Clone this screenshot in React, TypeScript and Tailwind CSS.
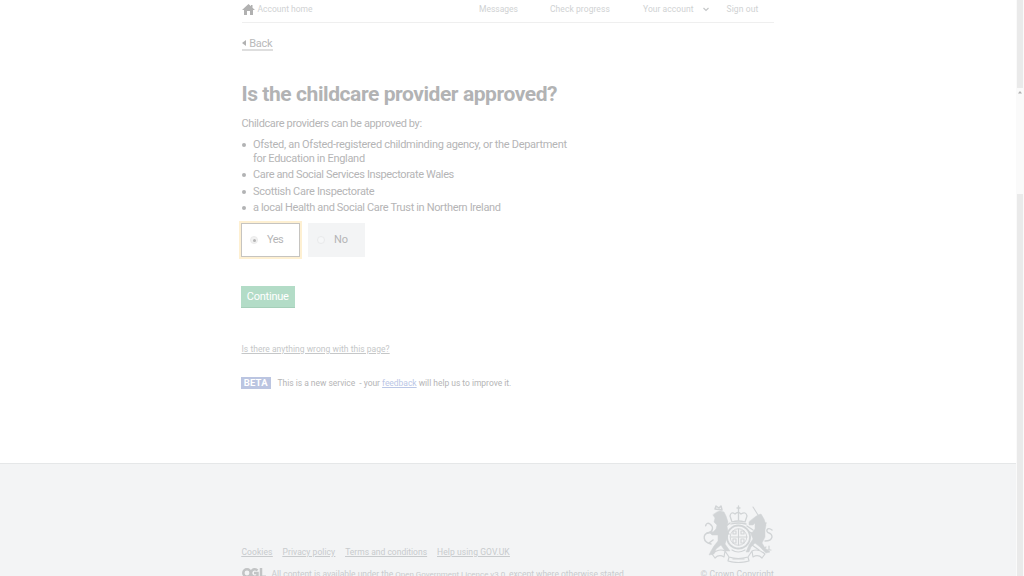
import React from "react";

const bullets = [
  { text: "Care and Social Services Inspectorate Wales", cls: "tracking-[-0.370px]" },
  { text: "Scottish Care Inspectorate", cls: "tracking-[-0.310px]" },
  { text: "a local Health and Social Care Trust in Northern Ireland", cls: "tracking-[-0.350px]" },
];

function Crest() {
  return (
    <svg className="shrink-0" width="71" height="59" viewBox="0 0 71 59" fill="#d1d4d6" stroke="#d1d4d6" strokeLinecap="round" strokeLinejoin="round">
      <path d="M29 18 L27 12 Q28 7 32 10 Q35 7 38 10 Q43 7 44 12 L42 18 Q35 16 29 18Z" fill="none" strokeWidth="1.300" />
      <path d="M35.500 2v14M34 4h3M28 20q7-2 15 0" fill="none" strokeWidth="1.300" />
      <circle cx="35.500" cy="33" r="11.500" fill="none" strokeWidth="1.900" strokeDasharray="2 .7" />
      <circle cx="35.500" cy="33" r="8.300" fill="none" strokeWidth=".9" />
      <path d="M35.500 25v16M28 33h15M30 27h3v3h-3zM38 27h3v3h-3zM30 35h3v4h-3zM38 35h3v4h-3z" fill="none" strokeWidth="1.100" />
      <path d="M14 8l3-1 4 1 2 4 2 6-1 4 1 6-1 6-2 6 5 7h-5l-4-6-5 4-2 5-5 1 2-4 3-5 4-5v-6l-6 0-2-2 3-1 3-3 1-4-3-3 1-4-2-3z" strokeWidth=".5" />
      <path d="M12 5l1-3 3 2 2-2 1 4zM23 22l4-3M23 28l3 2M9 28l-5 1M10 36l-4 3" fill="none" strokeWidth="1.500" />
      <path d="M8 40C-1 38 0 30 5 29S11 23 7 20 2 24 3 21" fill="none" strokeWidth="1.400" />
      <path d="M50 3l5 8" fill="none" strokeWidth="1.100" />
      <path d="M52 13l3-2 3-1 3 5 2 6-1 5 0 7-3 6 3 5 5 4-4 1-6-6-5-4-4 4-2 5-3 0 3-7 4-6-2-5 4-5 0-6-2 2-4 0 0-3z" strokeWidth=".5" />
      <path d="M50 26l-6-4M51 30l-5-2M62 37c9 0 8-7 4-8s-2-7 3-3M49 41l7 5M61 21l2-2" fill="none" strokeWidth="1.400" />
      <path d="M9 50q7-6 13-3l-1 6q-5-3-9 1zM62 50q-7-6-13-3l1 6q5-3 9 1zM22 47l4 6q9 3 19 0l4-6M26 53l-1 4q10 3 21 0l-1-4" fill="none" strokeWidth="1.200" />
      <path d="M29 46q6 4 13 0M60 45l3-2M66 42v4M64 46h4M30 55h11" fill="none" strokeWidth="1.200" />
    </svg>
  );
}

export default function App() {
  return (
    <div className="flex h-[576px] w-[1024px] overflow-hidden bg-white font-['Roboto','Liberation_Sans',sans-serif] text-[#b5b5b6]">
      <div className="flex w-[1016px] flex-col">
        <main className="h-[463px] shrink-0 px-[241.500px]">
          <header className="flex h-[22.500px] w-[532.500px] border-b border-[#efefef] text-[8.500px] leading-[19px] whitespace-nowrap text-[#d0d2d3]">
            <div className="flex w-[237.500px] gap-[3px]">
              <svg className="mt-[4px]" width="13" height="11" viewBox="0 0 13 11" fill="#b1b1b1">
                <path d="M6.500 0 0 6h2v5h3V7h3v4h3V6h2L10.500 3.700V1H9v1.300z" />
              </svg>
              <span>Account home</span>
            </div>
            <span className="w-[71px]">Messages</span>
            <span className="w-[93px] tracking-[0.070px]">Check progress</span>
            <span className="flex w-[83.500px] justify-between pr-[18px] tracking-[0.050px]">
              Your account
              <svg className="mt-[7px]" width="6" height="5" viewBox="0 0 6 5" fill="none" stroke="#c5c7c8" strokeWidth="1.200"><path d="m.5 1 2.500 2.500L5.500 1" /></svg>
            </span>
            <span className="tracking-[0.100px]">Sign out</span>
          </header>
          <a className="mt-[14.500px] flex h-[14px] w-[31px] items-center justify-between border-b-2 border-[#dedede] text-[11px] leading-[13px] tracking-[-0.200px] text-[#b9b9ba]">
            <svg width="4" height="6" viewBox="0 0 4 6" fill="#b1b1b1"><path d="M4 0v6L0 3z" /></svg>
            Back
          </a>
          <h1 className="mt-[30px] text-[21px] leading-[26px] font-bold tracking-[-0.430px] whitespace-nowrap text-[#b2b3b4]">Is the childcare provider approved?</h1>
          <p className="mt-[9.500px] text-[11px] leading-[14px] tracking-[-0.360px] whitespace-nowrap">Childcare providers can be approved by:</p>
          <ul className="mt-[7.500px] flex list-none flex-col gap-[2.400px] text-[11px] leading-[14px] whitespace-nowrap">
            <li className="flex">
              <span className="mt-[5px] mr-[7.500px] h-[4px] w-[4px] rounded-full bg-[#b2b3b4]" />
              <span className="tracking-[-0.300px]">Ofsted, an Ofsted-registered childminding agency, or the Department<br />for Education in England</span>
            </li>
            {bullets.map((item) => (
              <li key={item.text} className="flex">
                <span className="mt-[5px] mr-[7.500px] h-[4px] w-[4px] rounded-full bg-[#b2b3b4]" />
                <span className={item.cls}>{item.text}</span>
              </li>
            ))}
          </ul>
          <div className="mt-[8px] -ml-[0.500px] flex gap-[8px] text-[11px]">
            <label className="flex h-[34px] w-[59px] items-center border border-[#c6c4c0] pl-[8px] tracking-[-0.500px] shadow-[0_0_0_2px_#fef0d2]">
              <span className="mr-[9px] flex h-[8px] w-[8px] items-center justify-center rounded-full border border-[#ebebeb] bg-[#f2f2f2]"><span className="h-[3px] w-[3px] rounded-full bg-[#b4b4b4]" /></span>Yes
            </label>
            <label className="flex h-[34px] w-[57px] items-center bg-[#f3f4f5] pl-[9px]">
              <span className="mr-[9px] h-[8px] w-[8px] rounded-full border border-[#e9eaeb] bg-[#f6f7f8]" />No
            </label>
          </div>
          <button className="mt-[28.500px] -ml-[0.500px] block h-[22px] w-[53.500px] border-b border-[#a5cfb9] bg-[#b3dcc7] text-[11px] leading-[22px] tracking-[-0.250px] whitespace-nowrap text-white">Continue</button>
          <a className="mt-[35px] block text-[8.500px] leading-[12px] tracking-[0.030px] whitespace-nowrap text-[#c5c7c8] underline">Is there anything wrong with this page?</a>
          <div className="mt-[22px] -ml-[0.500px] flex items-center gap-[7px] text-[8.500px] leading-[12px] whitespace-nowrap">
            <strong className="h-[12px] w-[29.500px] bg-[#bbc5e1] text-center text-[9.500px] tracking-[0.200px] text-white">BETA</strong>
            <span className="tracking-[-0.030px]">This is a new service &nbsp;- your <a className="text-[#bbc7e6] underline">feedback</a> will help us to improve it.</span>
          </div>
        </main>
        <footer className="flex h-[113px] justify-between border-t border-[#e5e7e8] bg-[#f3f4f5] pr-[242px] pl-[241.500px] text-[8.500px] whitespace-nowrap text-[#c8cbcd]">
          <div className="pt-[82px]">
            <nav className="flex h-[12px] gap-[10px] leading-[12px] underline">
              <a className="tracking-[0.080px]">Cookies</a><a className="tracking-[0.060px]">Privacy policy</a><a>Terms and conditions</a><a className="tracking-[0.080px]">Help using GOV.UK</a>
            </nav>
            <div className="mt-[10px] flex h-[12px] gap-[6px] leading-[12px]">
              <svg width="24" height="10" viewBox="0 0 24 10" fill="none" stroke="#c2c4c5" strokeWidth="2.500"><circle cx="5" cy="5" r="3.700" /><path d="M15.500 2.500A3.700 3.700 0 1 0 15.500 7.500V5H12M19 0v8.700h5" /></svg>
              <span className="tracking-[-0.020px]">All content is available under the <a className="text-[8px] underline">Open Government Licence v3.0</a>, except where otherwise stated</span>
            </div>
          </div>
          <div className="flex w-[74px] flex-col items-end pt-[40px]">
            <Crest />
            <span className="mt-[5px] shrink-0 leading-[12px] tracking-[0.120px]">© Crown Copyright</span>
          </div>
        </footer>
      </div>
      <aside className="flex w-[8px] flex-col bg-[#fafafa] pr-[1px] pl-[1px]">
        <div className="h-[88px] bg-[#eaeaea]" />
        <div className="flex h-[106px] justify-center pt-[3px]"><svg width="4" height="3" viewBox="0 0 4 3" fill="#b0b0b0"><path d="m2 0 2 2.500H0z" /></svg></div>
        <div className="h-[382px] bg-[#eaeaea]" />
      </aside>
    </div>
  );
}
